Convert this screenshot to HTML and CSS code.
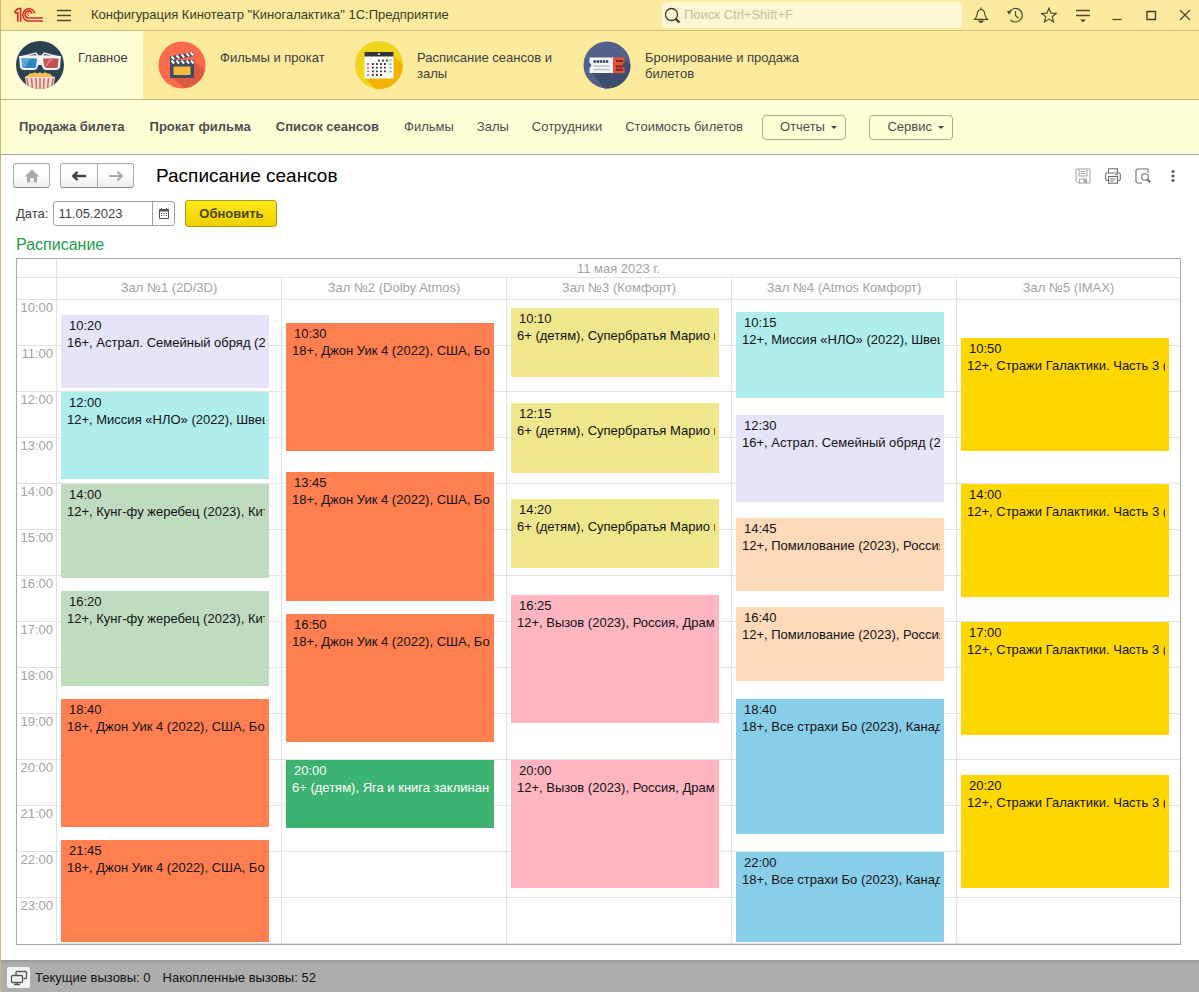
FILE: index.html
```
<!DOCTYPE html>
<html lang="ru">
<head>
<meta charset="utf-8">
<title>Расписание сеансов</title>
<link rel="stylesheet" href="styles.css">
</head>
<body>
<div class="window">
  <header class="titlebar">
    <svg class="logo" width="30" height="16" viewBox="0 0 30 16" fill="none" stroke="#d3302a" stroke-width="1.700">
      <path d="M.3 5.200L3.900 1.600H6.600V14.800M.8 5.800h3V14.800" />
      <path d="M20.800 6.200A6.100 6.100 0 1 0 14.800 14H29" />
      <path d="M18 6.600A3.500 3.500 0 1 0 14.800 11H29" />
      <path d="M15.800 7.200a1.200 1.200 0 1 0-1 1.400" stroke-width="1"/>
    </svg>
    <button class="icon-btn menu-btn" aria-label="Меню"><svg width="14" height="13" viewBox="0 0 14 13" stroke="#4d4930" stroke-width="1.300"><path d="M0 1.500h14M0 6.500h14M0 11.500h14"/></svg></button>
    <h1 class="app-title">Конфигурация Кинотеатр "Киногалактика" 1С:Предприятие</h1>
    <label class="search">
      <svg width="17" height="17" viewBox="0 0 17 17" fill="none" stroke="#3d3a28"><circle cx="7.500" cy="7.500" r="6" stroke-width="1.300"/><path d="M11.700 11.700l3.800 3.800" stroke-width="2.200"/></svg>
      <input type="search" placeholder="Поиск Ctrl+Shift+F" aria-label="Поиск">
    </label>
    <div class="window-tools">
      <button class="icon-btn" aria-label="Уведомления"><svg width="16" height="16" viewBox="0 0 16 16" fill="none" stroke="#4d4930" stroke-width="1.200"><path d="M1.600 12.400c2-1.800 2.400-3.200 2.700-5.600C4.600 4 5.800 2.500 8 2.500s3.400 1.500 3.700 4.300c.3 2.400.7 3.800 2.700 5.600zM8 2.500V.6"/><path d="M6 14h4l-2 1.600z" fill="#4d4930"/></svg></button>
      <button class="icon-btn" aria-label="История"><svg width="16" height="16" viewBox="0 0 16 16" fill="none" stroke="#4d4930" stroke-width="1.200"><path d="M2.200 5.500A6.800 6.800 0 1 1 3.600 13M8.500 4v4.500l3 2.800"/><path d="M.4 4.200h4L2 7.200z" fill="#4d4930" stroke-width=".6"/></svg></button>
      <button class="icon-btn" aria-label="Избранное"><svg width="16" height="16" viewBox="0 0 16 16" fill="none" stroke="#4d4930" stroke-width="1.200"><path d="M8 1.200l2 4.900 5.200.3-4 3.400 1.300 5.100L8 12.100l-4.500 2.800 1.300-5.100-4-3.400 5.200-.3z"/></svg></button>
      <button class="icon-btn" aria-label="Сервис и настройки"><svg width="16" height="16" viewBox="0 0 16 16" fill="none" stroke="#4d4930" stroke-width="1.300"><path d="M1 3.500h14M1 8.500h14"/><path d="M5 12.500h6L8 15.600z" fill="#4d4930" stroke="none"/></svg></button>
      <button class="icon-btn" aria-label="Свернуть"><svg width="16" height="16" viewBox="0 0 16 16" stroke="#4d4930" stroke-width="1.300"><path d="M3.500 12.500h9"/></svg></button>
      <button class="icon-btn" aria-label="Развернуть"><svg width="16" height="16" viewBox="0 0 16 16" fill="none" stroke="#3d3a28" stroke-width="1.300"><path d="M4 4.500h8.500v8H4z"/></svg></button>
      <button class="icon-btn" aria-label="Закрыть"><svg width="16" height="16" viewBox="0 0 16 16" stroke="#4d4930" stroke-width="1.300"><path d="M3 3l10 10M13 3L3 13"/></svg></button>
    </div>
  </header>

  <nav class="sections" aria-label="Разделы">
    <a class="section section-active" href="#main">
      <svg width="48" height="48" viewBox="0 0 48 48">
        <clipPath id="round"><circle cx="24" cy="24" r="24"/></clipPath>
        <g clip-path="url(#round)">
          <path fill="#2b4350" d="M0 0h48v48H0z"/>
          <path fill="none" stroke="#e8ecef" stroke-width="1.500" d="M5 16l15-4 2 3M43 16l-15-4-2 3"/>
          <path fill="#f1f3f5" d="M3 15q21-1.500 42 0l-1 11q-1 3-4 3H30q-3 0-3.500-3l-1-2h-3l-1 2q-.5 3-3.500 3H8q-3 0-4-3z"/>
          <path fill="#2f87c1" d="M5.500 17.500h15.500l-1 8.500q0 1-2 1H8q-2 0-2-2z"/>
          <path fill="#5aa9dc" d="M5.500 17.500h9l-6 9-2-.5z"/>
          <path fill="#c94f4f" d="M27 17.500h15.500L42 25q0 2-2 2h-9q-2.500 0-3-2z"/>
          <path fill="#dc8580" d="M37 17.500l-7 8.500-1-1 5-7.500z"/>
          <path fill="#f2bd55" d="M9 37q0-3 3-2.500 1-3 4-2 3-2 5 0 3-2 5.500 0 3-2 5 0 4-.5 4 2.500 3 0 3 2.500z"/>
          <path fill="#f4e3d8" d="M9 36h30l-2 12H11z"/>
          <path stroke="#d6675f" stroke-width="1.600" d="M11 37l1.500 11M15.500 37l1 11M20 37l.5 11M24 37v11M28 37l-.5 11M32.500 37l-1 11M37 37l-1.500 11"/>
        </g>
      </svg>
      <span>Главное</span>
    </a>
    <a class="section section-films" href="#films">
      <svg width="48" height="48" viewBox="0 0 48 48">
        <circle cx="24" cy="24" r="23.500" fill="#fb6a4d"/>
        <path fill="#dc5a43" d="M36 20l11 9A23.500 23.500 0 0 1 27 47.300L13 36z"/>
        <path fill="#3f4d60" d="M12 20h24v17H12z"/>
        <path fill="#f8b941" d="M15.500 25.500h17V34h-17z"/>
        <path fill="#3f4d60" d="M12 19h24v4H12zM11.500 15.500L35 11l.8 4-23.500 4.500z"/>
        <path stroke="#fff" stroke-width="2" d="M13.500 19.500l2.500 3M18.500 19.500l2.500 3M23.500 19.500l2.500 3M28.500 19.500l2.500 3M33 19.500l2.500 3M13.500 15.500l2.700 2.700M18.500 14.500l2.700 2.700M23.500 13.500l2.700 2.700M28.500 12.500l2.700 2.700M32.500 11.500l2.700 2.700"/>
      </svg>
      <span>Фильмы и прокат</span>
    </a>
    <a class="section section-halls" href="#halls">
      <svg width="48" height="48" viewBox="0 0 48 48">
        <circle cx="24" cy="24" r="24" fill="#efd51c"/>
        <path fill="#f2b200" d="M38 14l10 10A24 24 0 0 1 24 48q-4 0-4-1L10 37z"/>
        <path fill="#fff" d="M9.500 11.500h29v26h-29z"/>
        <path fill="#333538" d="M9.500 11h29v4.500h-29z"/>
        <circle cx="24" cy="13" r="1" fill="#fff"/>
        <path stroke="#333538" stroke-width="1.800" stroke-dasharray="1.800 2.200" d="M23 19.500h10M17 23h16M17 26.700h16M17 30.400h16M17 34h12"/>
        <path stroke="#e0566a" stroke-width="1.800" stroke-dasharray="1.800 1.900" d="M13 22.100v13"/>
        <path stroke="#3bb39a" stroke-width="1.800" stroke-dasharray="1.800 1.900" d="M35.500 18.500v13"/>
      </svg>
      <span>Расписание сеансов и залы</span>
    </a>
    <a class="section section-tickets" href="#tickets">
      <svg width="48" height="48" viewBox="0 0 48 48">
        <circle cx="24" cy="24" r="23.500" fill="#52628a"/>
        <path fill="#3e4d70" d="M41 17l6.500 7A23.500 23.500 0 0 1 21 47.300L8 31z"/>
        <path fill="#f2f4f7" d="M6.500 16.500H31v15.500H6.500v-5.500a2.300 2.300 0 0 0 0-4.500z"/>
        <path fill="#ea5134" d="M30 16.500h11.500V22a2.300 2.300 0 0 0 0 4.500V32H30z"/>
        <path stroke="#33405c" stroke-width="2.400" stroke-dasharray="2.400 .7" d="M10.500 20.500h15.500"/>
        <path stroke="#bcc2cc" stroke-width="1.300" d="M10.500 25h16M10.500 28.500h16"/>
        <path stroke="#6e2d2f" stroke-width="2" d="M33 20h7M33 25.500h7M33 28.700h7"/>
      </svg>
      <span>Бронирование и продажа билетов</span>
    </a>
  </nav>

  <nav class="commands" aria-label="Команды">
    <a class="strong" href="#sale">Продажа билета</a>
    <a class="strong" href="#rent">Прокат фильма</a>
    <a class="strong" href="#list">Список сеансов</a>
    <a href="#f">Фильмы</a>
    <a href="#h">Залы</a>
    <a href="#s">Сотрудники</a>
    <a href="#p">Стоимость билетов</a>
    <button class="drop">Отчеты<i class="caret"></i></button>
    <button class="drop">Сервис<i class="caret"></i></button>
  </nav>

  <main class="page">
    <div class="page-head">
      <button class="tool" aria-label="Домой"><svg width="16" height="14" viewBox="0 0 16 14" fill="#a9a9a9"><path d="M8 .5L15.500 7.500H13V13.500H9.800V9H6.200v4.500H3V7.500H.5z"/></svg></button>
      <div class="tool-pair">
        <button class="tool" aria-label="Назад"><svg width="16" height="12" viewBox="0 0 16 12" fill="none" stroke="#404040" stroke-width="2.400"><path d="M15 6H3M6.500 1.800L2.200 6l4.300 4.200"/></svg></button>
        <button class="tool" aria-label="Вперед"><svg width="16" height="12" viewBox="0 0 16 12" fill="none" stroke="#a9a9a9" stroke-width="2.200"><path d="M1 6h12M9.500 1.800L13.800 6l-4.300 4.200"/></svg></button>
      </div>
      <h2 class="page-title">Расписание сеансов</h2>
      <div class="page-tools">
        <button class="icon-btn" aria-label="Сохранить"><svg width="16" height="16" viewBox="0 0 16 16" fill="none" stroke="#a3a3a3"><path d="M1 1h14v14H3l-2-2zM4 1v7h8V1M5.500 3.500h5M5.500 5.500h5M4.500 15v-4h7v4"/><path d="M9 12h1.500v2H9z" fill="#a3a3a3"/></svg></button>
        <button class="icon-btn" aria-label="Печать"><svg width="16" height="16" viewBox="0 0 16 16" fill="none" stroke="#6c6c6c" stroke-width="1.100"><path d="M3.500 5V.8h9V5M3.500 12.500H2Q.7 12.500.7 11V6.500Q.7 5 2 5h12q1.300 0 1.300 1.500V11q0 1.500-1.300 1.500h-1.500M3.500 8.500h9v6.800h-9zM5.500 11h5M5.500 13h3M10 6.800h3"/></svg></button>
        <button class="icon-btn" aria-label="Предварительный просмотр"><svg width="16" height="16" viewBox="0 0 16 16" fill="none" stroke="#6c6c6c" stroke-width="1.100"><path d="M7 15H2.500Q1 15 1 13.500v-11Q1 1 2.500 1H13v4"/><circle cx="10" cy="9" r="3.300"/><path d="M12.400 11.400l2.800 2.800" stroke-width="2"/></svg></button>
        <button class="icon-btn" aria-label="Ещё"><svg width="16" height="16" viewBox="0 0 16 16" fill="#555"><circle cx="8" cy="3.500" r="1.500"/><circle cx="8" cy="8" r="1.500"/><circle cx="8" cy="12.500" r="1.500"/></svg></button>
      </div>
    </div>

    <form class="filter">
      <label for="date">Дата:</label>
      <div class="date-field">
        <input id="date" type="text" value="11.05.2023">
        <button type="button" aria-label="Выбрать дату"><svg width="10" height="11" viewBox="0 0 10 11" fill="none" stroke="#505050"><path d="M.5 1.500h9v9h-9z"/><path d="M.5 2.500h9" stroke-width="2"/><path d="M2.500 0v2M7.500 0v2"/><path d="M2 5.500h6M2 7.500h6" stroke-dasharray="1 1.500"/></svg></button>
      </div>
      <button type="button" class="refresh">Обновить</button>
    </form>

    <h3 class="group-title">Расписание</h3>

    <section class="planner">
      <div class="planner-day"><span class="gutter"></span><span class="head">11 мая 2023 г.</span></div>
      <div class="planner-halls">
        <span class="gutter"></span>
        <span class="head">Зал №1 (2D/3D)</span>
        <span class="head">Зал №2 (Dolby Atmos)</span>
        <span class="head">Зал №3 (Комфорт)</span>
        <span class="head">Зал №4 (Atmos Комфорт)</span>
        <span class="head">Зал №5 (IMAX)</span>
      </div>
      <div class="planner-body">
        <div class="hours">
          <time>10:00</time><time>11:00</time><time>12:00</time><time>13:00</time><time>14:00</time><time>15:00</time><time>16:00</time><time>17:00</time><time>18:00</time><time>19:00</time><time>20:00</time><time>21:00</time><time>22:00</time><time>23:00</time>
        </div>
        <div class="hall">
          <article class="show lavender" style="grid-row:21 / span 95"><time>10:20</time><p>16+, Астрал. Семейный обряд (2</p></article>
          <article class="show aqua" style="grid-row:121 / span 113"><time>12:00</time><p>12+, Миссия «НЛО» (2022), Швец</p></article>
          <article class="show sage" style="grid-row:241 / span 123"><time>14:00</time><p>12+, Кунг-фу жеребец (2023), Кит</p></article>
          <article class="show sage" style="grid-row:381 / span 123"><time>16:20</time><p>12+, Кунг-фу жеребец (2023), Кит</p></article>
          <article class="show coral" style="grid-row:521 / span 167"><time>18:40</time><p>18+, Джон Уик 4 (2022), США, Бо</p></article>
          <article class="show coral" style="grid-row:706 / span 133"><time>21:45</time><p>18+, Джон Уик 4 (2022), США, Бо</p></article>
        </div>
        <div class="hall">
          <article class="show coral" style="grid-row:31 / span 167"><time>10:30</time><p>18+, Джон Уик 4 (2022), США, Бо</p></article>
          <article class="show coral" style="grid-row:226 / span 167"><time>13:45</time><p>18+, Джон Уик 4 (2022), США, Бо</p></article>
          <article class="show coral" style="grid-row:411 / span 167"><time>16:50</time><p>18+, Джон Уик 4 (2022), США, Бо</p></article>
          <article class="show green" style="grid-row:601 / span 89"><time>20:00</time><p>6+ (детям), Яга и книга заклинан</p></article>
        </div>
        <div class="hall">
          <article class="show khaki" style="grid-row:11 / span 90"><time>10:10</time><p>6+ (детям), Супербратья Марио в</p></article>
          <article class="show khaki" style="grid-row:136 / span 90"><time>12:15</time><p>6+ (детям), Супербратья Марио в</p></article>
          <article class="show khaki" style="grid-row:261 / span 90"><time>14:20</time><p>6+ (детям), Супербратья Марио в</p></article>
          <article class="show pink" style="grid-row:386 / span 167"><time>16:25</time><p>12+, Вызов (2023), Россия, Драм</p></article>
          <article class="show pink" style="grid-row:601 / span 167"><time>20:00</time><p>12+, Вызов (2023), Россия, Драм</p></article>
        </div>
        <div class="hall">
          <article class="show aqua" style="grid-row:16 / span 113"><time>10:15</time><p>12+, Миссия «НЛО» (2022), Швец</p></article>
          <article class="show lavender" style="grid-row:151 / span 113"><time>12:30</time><p>16+, Астрал. Семейный обряд (2</p></article>
          <article class="show peach" style="grid-row:286 / span 95"><time>14:45</time><p>12+, Помилование (2023), Россия</p></article>
          <article class="show peach" style="grid-row:401 / span 97"><time>16:40</time><p>12+, Помилование (2023), Россия</p></article>
          <article class="show sky" style="grid-row:521 / span 176"><time>18:40</time><p>18+, Все страхи Бо (2023), Канад</p></article>
          <article class="show sky" style="grid-row:721 / span 118"><time>22:00</time><p>18+, Все страхи Бо (2023), Канад</p></article>
        </div>
        <div class="hall">
          <article class="show gold" style="grid-row:51 / span 147"><time>10:50</time><p>12+, Стражи Галактики. Часть 3 (</p></article>
          <article class="show gold" style="grid-row:241 / span 147"><time>14:00</time><p>12+, Стражи Галактики. Часть 3 (</p></article>
          <article class="show gold" style="grid-row:421 / span 147"><time>17:00</time><p>12+, Стражи Галактики. Часть 3 (</p></article>
          <article class="show gold" style="grid-row:621 / span 147"><time>20:20</time><p>12+, Стражи Галактики. Часть 3 (</p></article>
        </div>
      </div>
    </section>
  </main>

  <footer class="status">
    <button class="status-btn" aria-label="Вызовы сервера"><svg width="18" height="16" viewBox="0 0 18 16" fill="none" stroke="#555" stroke-width="1.300"><path d="M6 5V2.500Q6 1.500 7 1.500h8.500q1 0 1 1v5q0 1-1 1h-2"/><rect x="1.500" y="5.500" width="11" height="7" rx="1.200" fill="#f4f4f4"/><path d="M7 12.500v2M4 14.500h6"/></svg></button>
    <span>Текущие вызовы: 0</span>
    <span>Накопленные вызовы: 52</span>
  </footer>
</div>
</body>
</html>
```
FILE: styles.css
```
* { box-sizing: border-box; }
body {
  margin: 0;
  font: 13px/16px "Liberation Sans", Arial, sans-serif;
  color: #404040;
  background: #fff;
}
h1, h2, h3, p { margin: 0; font-weight: normal; }
button, input { font: inherit; color: inherit; }
a { color: inherit; text-decoration: none; }
svg { display: block; flex: none; }

.window {
  display: flex;
  flex-direction: column;
  min-height: 100vh;
  border-left: 1px solid #cdb974;
}
.icon-btn {
  display: flex;
  padding: 0;
  border: 0;
  background: none;
}

/* Title bar */
.titlebar {
  display: flex;
  align-items: center;
  height: 31px;
  padding-left: 13px;
  border-bottom: 1px solid #cdbd72;
  background: #fbeb9e;
}
.menu-btn { margin-left: 13px; }
.app-title { margin-left: 20px; font-size: 13px; color: #3d3a28; }
.search {
  display: flex;
  align-items: center;
  gap: 3px;
  width: 300px;
  height: 26px;
  margin-left: auto;
  padding-left: 2px;
  border-radius: 3px;
  background: #fdf6d4;
}
.search input {
  flex: 1;
  min-width: 0;
  padding: 0;
  border: 0;
  outline: 0;
  background: none;
}
.search input::placeholder { color: #c4bfa8; opacity: 1; }
.window-tools {
  display: flex;
  gap: 18px;
  padding: 0 6px 0 11px;
}

/* Sections */
.sections {
  display: flex;
  height: 69px;
  border-bottom: 1px solid #c4b46c;
  background: #fceb9d;
}
.section {
  display: flex;
  align-items: flex-start;
  gap: 14px;
  padding: 10px 0 0 14px;
}
.section span { padding-top: 9px; }
.section-active { width: 142px; padding-left: 15px; background: #ffffd6; }
.section-films { width: 197px; padding-left: 15px; }
.section-halls { width: 229px; padding-left: 15px; }
.section-tickets { width: 236px; }

/* Commands */
.commands {
  display: flex;
  align-items: center;
  gap: 23px;
  height: 55px;
  padding-left: 18px;
  border-bottom: 1px solid #aaa;
  background: #ffffd6;
  color: #4d4d4d;
}
.strong { margin-right: 2px; font-weight: bold; }
.commands a:last-of-type { margin-right: -4px; }
.drop {
  display: flex;
  align-items: center;
  justify-content: flex-end;
  gap: 6px;
  width: 84px;
  height: 25px;
  padding: 0 8px 0 0;
  border: 1px solid #a8a88c;
  border-radius: 4px;
  background: none;
}
.caret {
  border: 3px solid transparent;
  border-top-color: #404040;
  border-bottom: 0;
}

/* Page */
.page {
  display: flex;
  flex: 1;
  flex-direction: column;
  padding: 8px 18px 15px 12px;
}
.page-head { display: flex; align-items: center; height: 25px; }
.tool {
  display: flex;
  align-items: center;
  justify-content: center;
  width: 37px;
  height: 25px;
  padding: 0;
  border: 1px solid #aaa;
  border-bottom-color: #8c8c8c;
  border-radius: 3px;
  background: linear-gradient(#fff 50%, #ececec);
}
.tool-pair { display: flex; margin-left: 10px; }
.tool-pair .tool:first-child { width: 38px; border-radius: 3px 0 0 3px; }
.tool-pair .tool:last-child { width: 36px; border-left: 0; border-radius: 0 3px 3px 0; }
.page-title { margin-left: 22px; font-size: 19px; line-height: 24px; color: #000; }
.page-tools { display: flex; gap: 14px; margin-left: auto; }

.filter {
  display: flex;
  align-items: center;
  height: 27px;
  margin: 12px 0 0 3px;
}
.date-field {
  display: flex;
  width: 122px;
  height: 25px;
  margin: 0 10px 0 5px;
  border: 1px solid #a0a0a0;
  border-radius: 3px;
}
.date-field input {
  flex: 1;
  min-width: 0;
  padding: 0 4px;
  border: 0;
  outline: 0;
  background: none;
}
.date-field button {
  display: flex;
  align-items: center;
  justify-content: center;
  width: 22px;
  padding: 0;
  border: 0;
  border-left: 1px solid #a0a0a0;
  background: none;
}
.refresh {
  width: 92px;
  height: 27px;
  padding: 0;
  border: 1px solid #b09a1c;
  border-radius: 3px;
  background: linear-gradient(#ffea18, #eecf00);
  font-weight: bold;
  color: #4d4600;
}
.group-title {
  margin: 8px 0 3px 3px;
  font-size: 16px;
  line-height: 20px;
  color: #1e9c4c;
}

/* Planner */
.planner {
  display: flex;
  flex: 1;
  flex-direction: column;
  margin-left: 3px;
  border: 1px solid #a8a8a8;
  color: #a3a3a3;
}
.planner-day, .planner-halls, .planner-body {
  display: grid;
  grid-template-columns: 40px repeat(4, 225fr) 223fr;
}
.planner-day { height: 19px; border-bottom: 1px solid #e2e2e2; }
.planner-day .head { grid-column: 2 / -1; }
.planner-halls { height: 22px; border-bottom: 1px solid #e2e2e2; }
.gutter, .hours { border-right: 1px solid #e2e2e2; }
.head { text-align: center; line-height: 20px; }
.planner-day .head { line-height: 19px; }
.planner-halls .head:not(:last-child), .hall:not(:last-child) { border-right: 1px solid #e2e2e2; }
.planner-body { flex: 1; min-height: 560px; }
.hours { display: grid; grid-template-rows: repeat(14, 1fr); }
.hours time { padding-right: 3px; text-align: right; border-bottom: 1px solid #e2e2e2; }
.hours time:last-child { border-bottom: 0; }
.hall {
  display: grid;
  grid-template-rows: repeat(840, minmax(0, 1fr));
  grid-template-columns: minmax(0, 1fr);
  padding: 0 12px 0 4px;
  background: linear-gradient(to top, #e2e2e2 1px, transparent 1px) 0 0 / 100% calc(100% / 14);
}
.hall:last-child { padding-right: 11px; }
.show {
  min-height: 0;
  padding: 2px 4px 0 6px;
  overflow: hidden;
  line-height: 17px;
  color: #111;
}
.show time { display: block; padding-left: 2px; }
.show p { overflow: hidden; white-space: nowrap; }
.lavender { background: #e6e4fa; }
.aqua { background: #afeeec; }
.sage { background: #c0dcc0; }
.coral { background: #ff7f50; }
.green { background: #3cb371; color: #fff; }
.khaki { background: #f0e68c; }
.pink { background: #ffb6c1; }
.peach { background: #ffdab9; }
.sky { background: #87ceeb; }
.gold { background: #ffd700; }

/* Status bar */
.status {
  display: flex;
  align-items: center;
  gap: 12px;
  height: 32px;
  padding: 3px 0 0 6px;
  background: linear-gradient(#9a9a9a, #adadad 4px);
  color: #111;
}
.status-btn {
  display: flex;
  align-items: center;
  justify-content: center;
  width: 23px;
  height: 21px;
  margin-right: -7px;
  padding: 0;
  border: 0;
  border-radius: 2px;
  background: #f4f4f4;
}
```
